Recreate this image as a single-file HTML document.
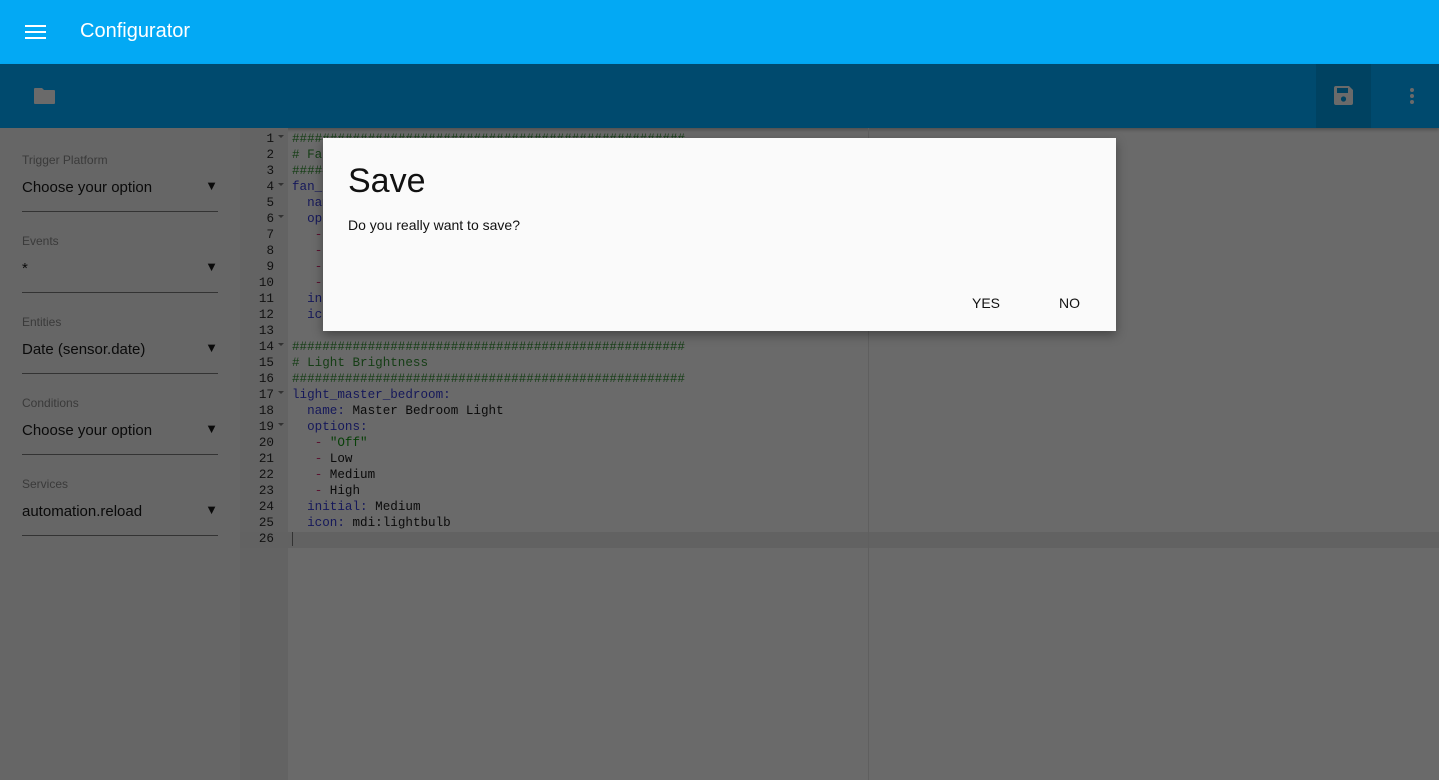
<!DOCTYPE html>
<html><head><meta charset="utf-8"><style>
*{margin:0;padding:0;box-sizing:border-box}
body{width:1439px;height:780px;overflow:hidden;background:#6a6a6a;font-family:"Liberation Sans",sans-serif;position:relative}
.top{position:absolute;left:0;top:0;width:1439px;height:64px;background:#03a9f4;color:#fff}
.top .t{position:absolute;left:80px;top:20px;font-size:20px}
.tb{position:absolute;left:0;top:64px;width:1439px;height:64px;background:#004a6e;box-shadow:0 2px 3px rgba(0,0,0,.25)}
.savebtn{position:absolute;left:1316px;top:0;width:55px;height:64px;background:#004261}
.side{position:absolute;left:0;top:128px;width:240px;height:652px;background:#666}
.f{position:absolute;left:22px;width:196px;height:60px;border-bottom:1px solid #333}
.f .l{font-size:12px;color:#3a3a3a;position:absolute;top:1px}
.f .v{font-size:15px;color:#0a0a0a;position:absolute;top:27px}
.f .a{position:absolute;right:0;top:26px;font-size:13px;color:#0a0a0a}
.gut{position:absolute;left:240px;top:128px;width:48px;height:652px;background:#636363}
.code{position:absolute;left:240px;top:131px;font-family:"Liberation Mono",monospace;font-size:12.6px;line-height:16px;color:#0a0a0a;white-space:pre}
.code div{height:16px}
.ln{display:inline-block;width:34px;text-align:right;color:#111}
.fd{display:inline-block;width:18px;height:10px;position:relative}
.fd.o::after{content:"";position:absolute;left:4px;top:3px;border-left:3px solid transparent;border-right:3px solid transparent;border-top:3px solid #333}
.c{color:#143d14}.k{color:#15185a}.d{color:#5a1230}.s{color:#084008}
.act{position:absolute;left:240px;top:532px;width:1199px;height:16px;background:#626262}
.marg{position:absolute;left:868px;top:128px;width:1px;height:652px;background:#5f5f5f}
.dlg{position:absolute;left:323px;top:138px;width:793px;height:193px;background:#fafafa;box-shadow:0 4px 10px rgba(0,0,0,.35)}
.dlg h1{position:absolute;left:25px;top:24px;font-weight:normal;font-size:34px;color:#111}
.dlg p{position:absolute;left:25px;top:79px;font-size:14px;color:#111}
.btn{position:absolute;top:157px;font-size:14px;color:#111}
</style></head><body>
<div class="top">
<svg style="position:absolute;left:25px;top:24px" width="21" height="16" viewBox="0 0 21 16"><rect y="1" width="21" height="2" fill="#fff"/><rect y="7" width="21" height="2" fill="#fff"/><rect y="13" width="21" height="2" fill="#fff"/></svg>
<div class="t">Configurator</div></div>
<div class="tb">
<svg style="position:absolute;left:34px;top:24px" width="21" height="16" viewBox="0 0 21 16"><path d="M1 0h7l2 2h10a1 1 0 0 1 1 1v12a1 1 0 0 1-1 1H1a1 1 0 0 1-1-1V1a1 1 0 0 1 1-1z" fill="#6a6a6a"/></svg>
<div class="savebtn"><svg style="position:absolute;left:18px;top:22px" width="19" height="19" viewBox="0 0 19 19"><path d="M2 0h13l4 4v13a2 2 0 0 1-2 2H2a2 2 0 0 1-2-2V2a2 2 0 0 1 2-2z" fill="#6a6a6a"/><rect x="3" y="2" width="11" height="5" fill="#004261"/><circle cx="9.5" cy="13" r="2.6" fill="#004261"/></svg></div>
<svg style="position:absolute;left:1409px;top:23px" width="6" height="18" viewBox="0 0 6 18"><circle cx="3" cy="3" r="2" fill="#6a6a6a"/><circle cx="3" cy="9" r="2" fill="#6a6a6a"/><circle cx="3" cy="15" r="2" fill="#6a6a6a"/></svg>
</div>
<div class="side">
<div class="f" style="top:24px"><div class="l">Trigger Platform</div><div class="v">Choose your option</div><div class="a">▼</div></div>
<div class="f" style="top:105px"><div class="l">Events</div><div class="v">*</div><div class="a">▼</div></div>
<div class="f" style="top:186px"><div class="l">Entities</div><div class="v">Date (sensor.date)</div><div class="a">▼</div></div>
<div class="f" style="top:267px"><div class="l">Conditions</div><div class="v">Choose your option</div><div class="a">▼</div></div>
<div class="f" style="top:348px"><div class="l">Services</div><div class="v">automation.reload</div><div class="a">▼</div></div>
</div>
<div class="gut"></div>
<div class="act"></div>
<div class="marg"></div>
<div class="code"><div><span class="ln">1</span><span class="fd o"></span><span class="c">####################################################</span></div><div><span class="ln">2</span><span class="fd"></span><span class="c"># Fan Speed</span></div><div><span class="ln">3</span><span class="fd"></span><span class="c">####################################################</span></div><div><span class="ln">4</span><span class="fd o"></span><span class="k">fan_speed:</span></div><div><span class="ln">5</span><span class="fd"></span>  <span class="k">name:</span> Fan</div><div><span class="ln">6</span><span class="fd o"></span>  <span class="k">options:</span></div><div><span class="ln">7</span><span class="fd"></span>   <span class="d">-</span> Off</div><div><span class="ln">8</span><span class="fd"></span>   <span class="d">-</span> Low</div><div><span class="ln">9</span><span class="fd"></span>   <span class="d">-</span> Medium</div><div><span class="ln">10</span><span class="fd"></span>   <span class="d">-</span> High</div><div><span class="ln">11</span><span class="fd"></span>  <span class="k">initial:</span> Off</div><div><span class="ln">12</span><span class="fd"></span>  <span class="k">icon:</span> mdi:fan</div><div><span class="ln">13</span><span class="fd"></span></div><div><span class="ln">14</span><span class="fd o"></span><span class="c">####################################################</span></div><div><span class="ln">15</span><span class="fd"></span><span class="c"># Light Brightness</span></div><div><span class="ln">16</span><span class="fd"></span><span class="c">####################################################</span></div><div><span class="ln">17</span><span class="fd o"></span><span class="k">light_master_bedroom:</span></div><div><span class="ln">18</span><span class="fd"></span>  <span class="k">name:</span> Master Bedroom Light</div><div><span class="ln">19</span><span class="fd o"></span>  <span class="k">options:</span></div><div><span class="ln">20</span><span class="fd"></span>   <span class="d">-</span> <span class="s">"Off"</span></div><div><span class="ln">21</span><span class="fd"></span>   <span class="d">-</span> Low</div><div><span class="ln">22</span><span class="fd"></span>   <span class="d">-</span> Medium</div><div><span class="ln">23</span><span class="fd"></span>   <span class="d">-</span> High</div><div><span class="ln">24</span><span class="fd"></span>  <span class="k">initial:</span> Medium</div><div><span class="ln">25</span><span class="fd"></span>  <span class="k">icon:</span> mdi:lightbulb</div><div><span class="ln">26</span><span class="fd"></span><span style="border-left:1px solid #333"></span></div></div>
<div class="dlg"><h1>Save</h1><p>Do you really want to save?</p><div class="btn" style="left:649px">YES</div><div class="btn" style="left:736px">NO</div></div>
</body></html>
